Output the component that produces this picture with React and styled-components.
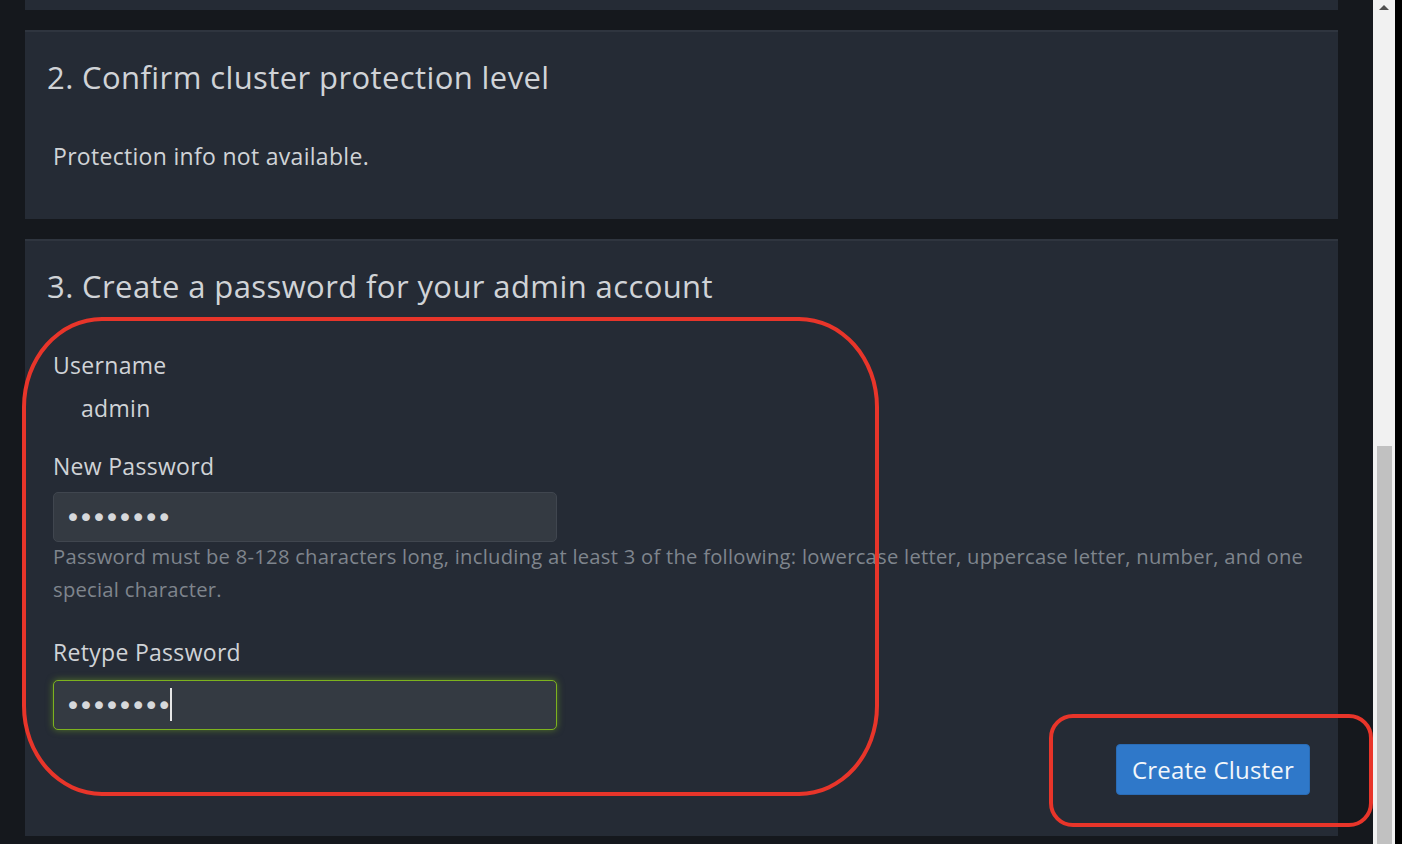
import styled, { createGlobalStyle } from 'styled-components';

const GlobalStyle = createGlobalStyle`
  html, body {
    margin: 0;
    padding: 0;
    background: #15181d;
    overflow: hidden;
  }
  * {
    box-sizing: border-box;
  }
`;

const Screen = styled.div`
  width: 1402px;
  height: 844px;
  display: flex;
  font-family: 'Open Sans', 'Noto Sans', sans-serif;
  overflow: hidden;
`;

const Main = styled.div`
  width: 1373px;
  padding: 0 35px 0 25px;
  display: flex;
  flex-direction: column;
  gap: 20px;
`;

const Card = styled.section`
  position: relative;
  background: #252b35;
  border-top: ${({ $cut }) => ($cut ? 'none' : '2px solid #2f353f')};
  height: ${({ $h }) => $h}px;
  padding: 0 22px;
  flex-shrink: 0;
`;

const Heading = styled.h2`
  margin: 0;
  padding-top: 25px;
  font-size: 31px;
  font-weight: 400;
  letter-spacing: 0.4px;
  line-height: 40px;
  color: #d0d3d7;
`;

const Info = styled.p`
  margin: 44px 0 0 6px;
  font-size: 23px;
  letter-spacing: 0.3px;
  line-height: 30px;
  color: #d0d3d7;
`;

const Form = styled.div`
  margin: 44px 0 0 6px;
  display: flex;
  flex-direction: column;
`;

const Label = styled.div`
  font-size: 23px;
  letter-spacing: 0.3px;
  line-height: 30px;
  color: #d0d3d7;
  margin-top: ${({ $mt }) => $mt || 0}px;
`;

const Value = styled(Label)`
  padding-left: 28px;
  margin-top: 13px;
`;

const Field = styled.div`
  position: relative;
  width: 504px;
  margin-top: ${({ $mt }) => $mt}px;
`;

const Input = styled.input`
  display: block;
  width: 504px;
  height: 50px;
  padding: 0 11px;
  background: #343a42;
  border: 1px solid ${({ $focus }) => ($focus ? '#7db21e' : '#40464f')};
  border-radius: 5px;
  box-shadow: ${({ $focus }) => ($focus ? '0 0 7px rgba(130, 190, 30, 0.5)' : 'none')};
  color: #d6d8db;
  font-family: 'DejaVu Sans', sans-serif;
  font-size: 27px;
  letter-spacing: -2.9px;
  outline: none;
  caret-color: transparent;
`;

const Caret = styled.span`
  position: absolute;
  left: 117px;
  top: 8px;
  width: 2px;
  height: 33px;
  background: #e6e6e6;
`;

const Help = styled.p`
  margin: -2px 0 0;
  font-size: 20.2px;
  letter-spacing: 0.26px;
  line-height: 33px;
  color: #7f858d;
  max-width: 1265px;
`;

const Actions = styled.div`
  position: absolute;
  right: 28px;
  bottom: 41px;
`;

const Button = styled.button`
  height: 51px;
  padding: 0 15px;
  background: #2f78c9;
  border: 1px solid #2a6cb6;
  border-radius: 4px;
  color: #f2f6fb;
  font-family: 'Open Sans', 'Noto Sans', sans-serif;
  font-size: 24px;
  letter-spacing: 0.2px;
`;

const Mark = styled.div`
  position: absolute;
  left: ${({ $x }) => $x}px;
  top: ${({ $y }) => $y}px;
  width: ${({ $w }) => $w}px;
  height: ${({ $h }) => $h}px;
  border: 4px solid #e8352a;
  border-radius: ${({ $r }) => $r};
  pointer-events: none;
`;

const Scrollbar = styled.div`
  width: 22px;
  height: 844px;
  background: #f1f1f1;
  display: flex;
  flex-direction: column;
  align-items: center;
`;

const Arrow = styled.div`
  margin-top: 5px;
  width: 0;
  height: 0;
  border-left: 5px solid transparent;
  border-right: 5px solid transparent;
  border-bottom: 5px solid #505050;
`;

const Thumb = styled.div`
  margin-top: 436px;
  width: 15px;
  flex: 1;
  background: #c1c1c1;
`;

const Edge = styled.div`
  width: 7px;
  height: 844px;
  background: #000;
`;

export default function App() {
  return (
    <>
      <GlobalStyle />
      <Screen>
        <Main>
          <Card $cut $h={10} />
          <Card $h={189}>
            <Heading>2. Confirm cluster protection level</Heading>
            <Info>Protection info not available.</Info>
          </Card>
          <Card $h={597}>
            <Heading>3. Create a password for your admin account</Heading>
            <Form>
              <Label>Username</Label>
              <Value>admin</Value>
              <Label $mt={28}>New Password</Label>
              <Field $mt={11}>
                <Input type="password" defaultValue="abcdefgh" readOnly />
              </Field>
              <Help>
                Password must be 8-128 characters long, including at least 3 of the following: lowercase letter,
                uppercase letter, number, and one special character.
              </Help>
              <Label $mt={31}>Retype Password</Label>
              <Field $mt={13}>
                <Input type="password" defaultValue="abcdefgh" readOnly $focus />
                <Caret />
              </Field>
            </Form>
            <Actions>
              <Button>Create Cluster</Button>
            </Actions>
          </Card>
          <Mark $x={22} $y={317} $w={857} $h={479} $r="80px / 90px" />
          <Mark $x={1049} $y={714} $w={324} $h={113} $r="24px" />
        </Main>
        <Scrollbar>
          <Arrow />
          <Thumb />
        </Scrollbar>
        <Edge />
      </Screen>
    </>
  );
}
